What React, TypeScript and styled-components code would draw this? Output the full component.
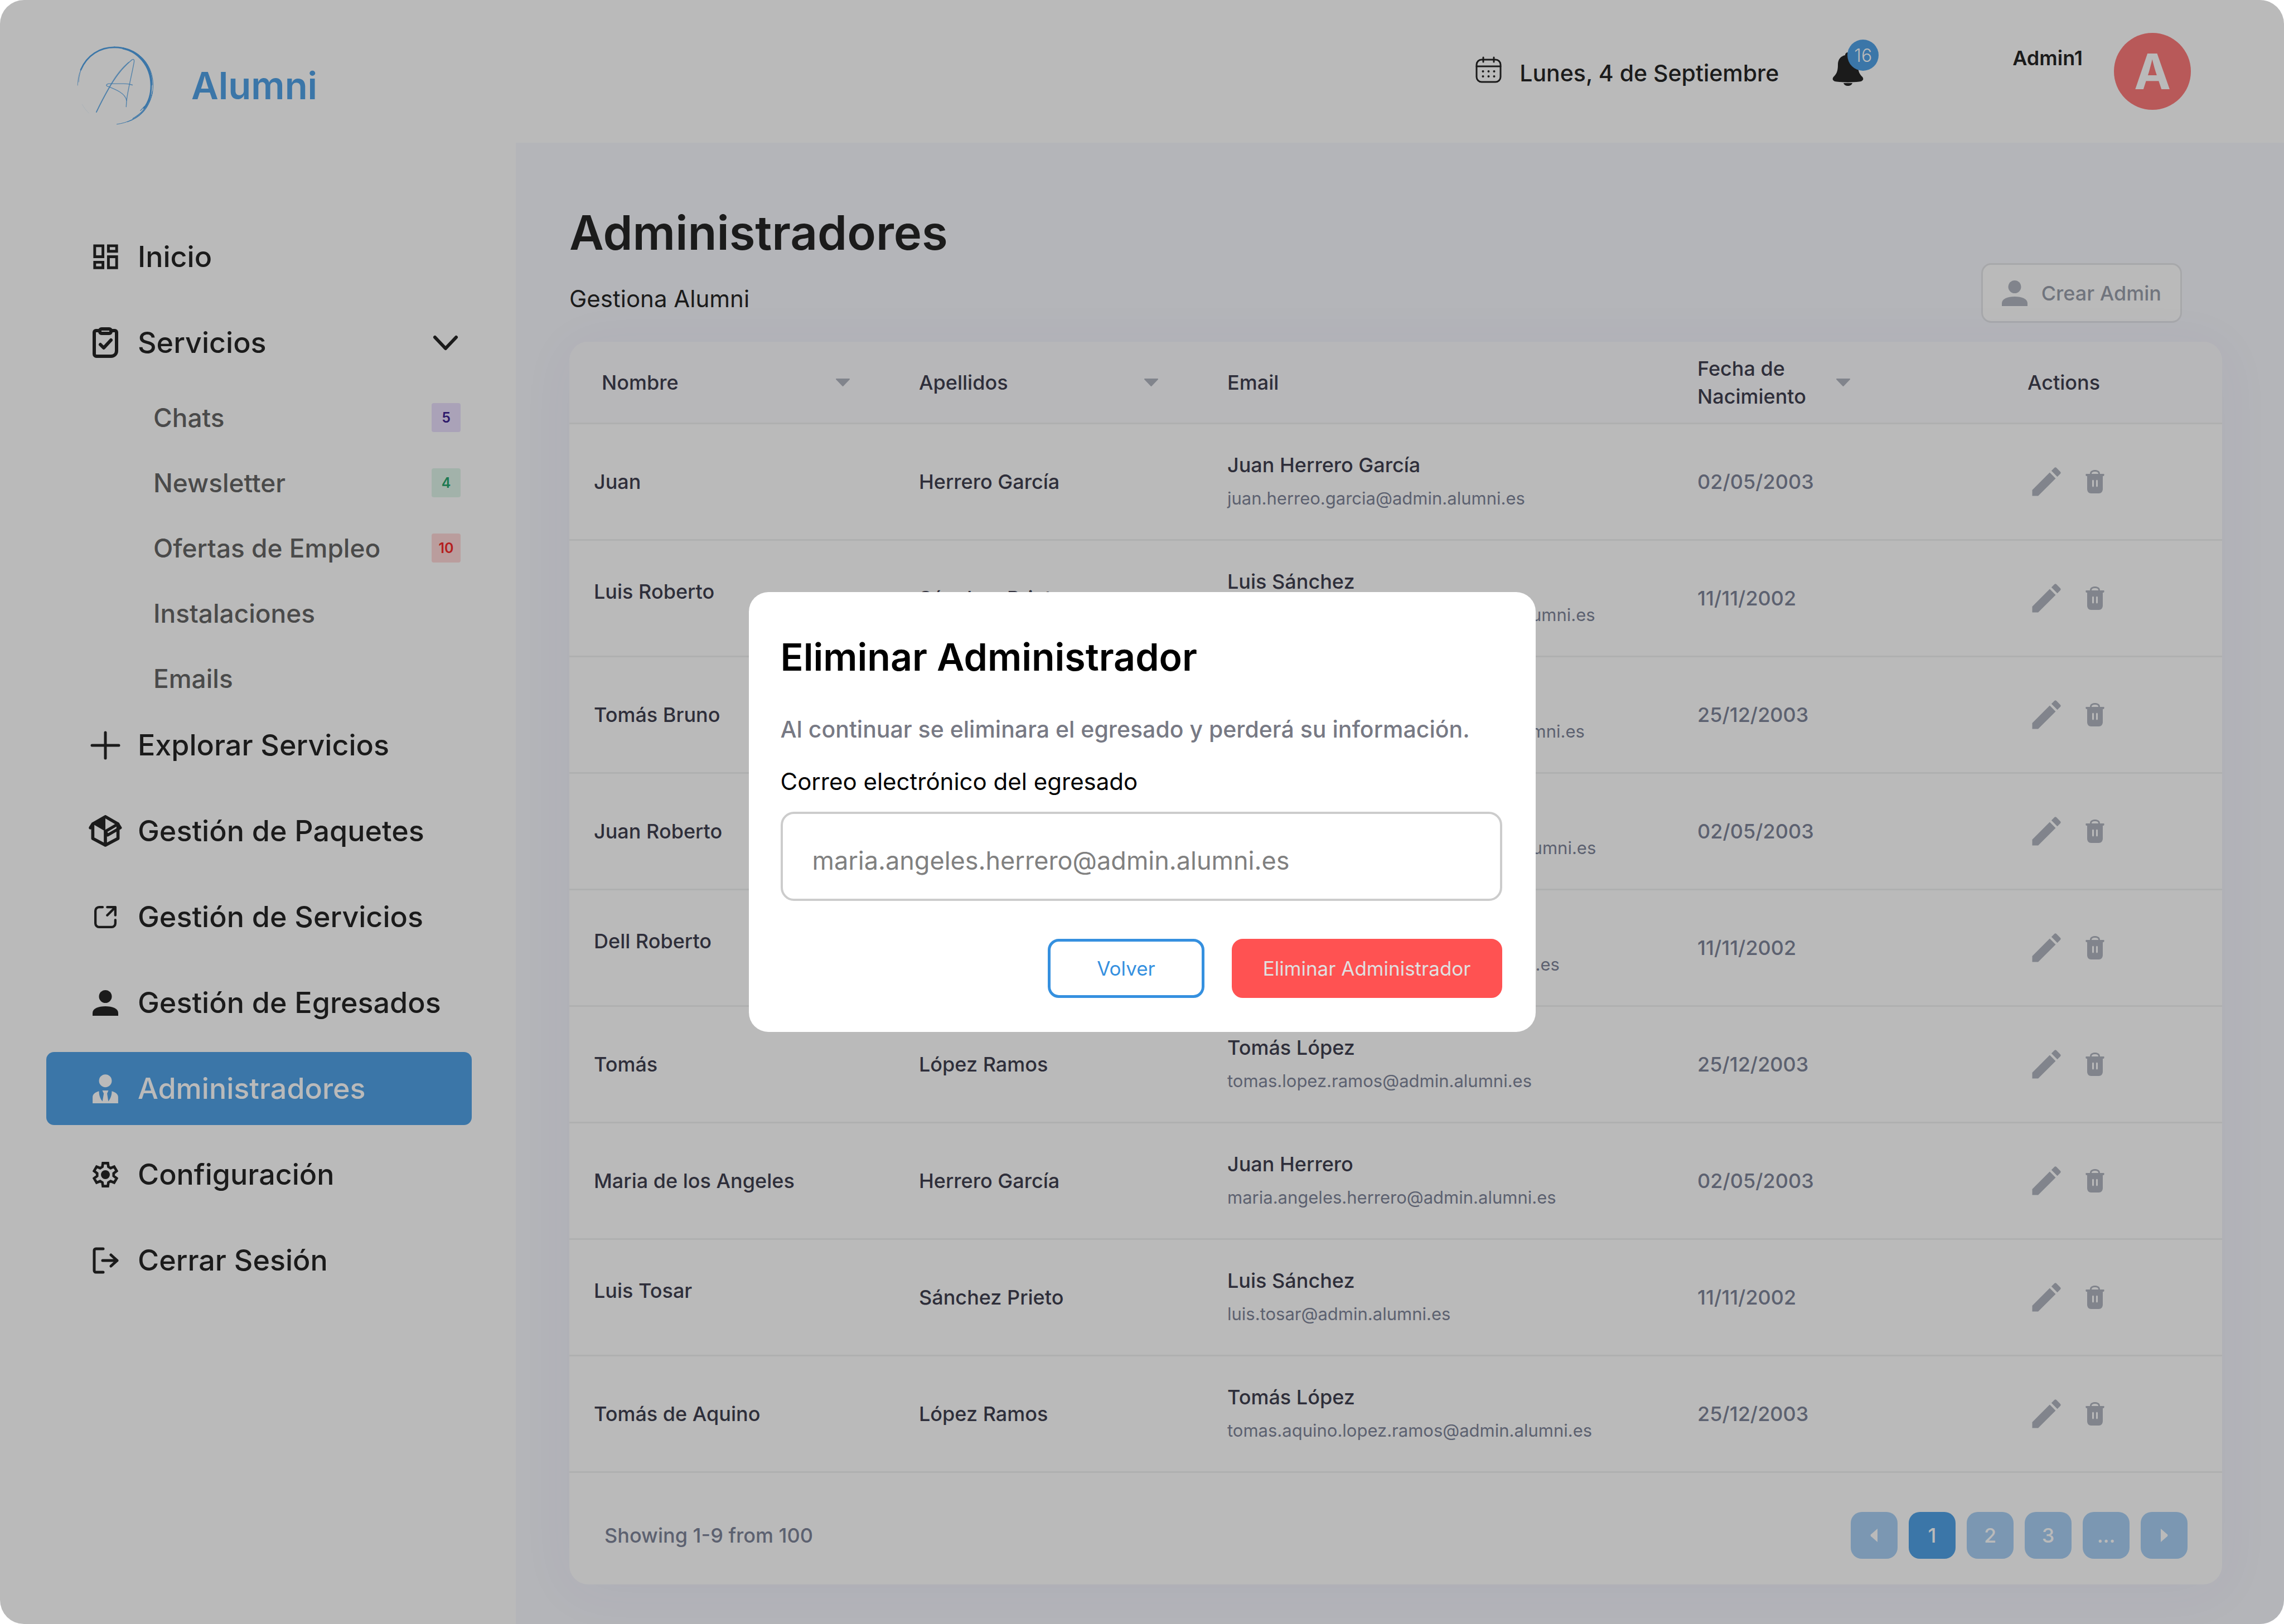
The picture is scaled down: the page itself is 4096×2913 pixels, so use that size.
import React from "react";
import styled, { createGlobalStyle, css } from "styled-components";
import { MdOutlineDashboard, MdEdit } from "react-icons/md";

const Global = createGlobalStyle`
  *, *::before, *::after { box-sizing: border-box; }
  body { margin: 0; background: #fff; font-family: Inter, "Liberation Sans", sans-serif; color: #262626; }
  button, input { font: inherit; color: inherit; }
  button { cursor: pointer; }
  ul { list-style: none; margin: 0; padding: 0; }
  h1, h2, p { margin: 0; }
  a { color: inherit; text-decoration: none; }
  svg { display: block; flex: none; }
`;

const Page = styled.div`
  position: relative;
  min-height: 100vh;
  display: flex;
  flex-direction: column;
  background: #fff;
  border-radius: 43px;
  overflow: hidden;
`;

/* ---------- top bar ---------- */
const Header = styled.header`
  display: flex;
  height: 256px;
  padding: 59px 167px 0 138px;
`;
const Brand = styled.a`
  display: flex;
  gap: 66px;
  height: 188px;
  align-items: center;
  color: #52a2e6;
  font-size: 67px;
  font-weight: 600;
`;
const HeaderTools = styled.div`
  display: flex;
  margin-left: auto;
`;
const DateLabel = styled.time`
  display: flex;
  align-items: flex-end;
  height: 90px;
  gap: 32px;
  font-size: 41px;
  font-weight: 500;
  line-height: 36px;
`;
const BellButton = styled.button`
  position: relative;
  width: 84px;
  height: 100px;
  margin: 6px 239px 0 96px;
  padding: 0;
  border: 0;
  background: none;
`;
const BellIcon = styled.svg`
  width: 56px;
  height: 60px;
  margin-top: 18px;
`;
const BellCount = styled.span`
  position: absolute;
  top: 6px;
  left: 27px;
  width: 56px;
  height: 56px;
  border-radius: 50%;
  background: #52a2e6;
  color: #fff;
  font-size: 32px;
  font-weight: 300;
  line-height: 58px;
  text-align: center;
`;
const UserName = styled.span`
  margin-right: 56px;
  font-size: 36px;
  font-weight: 600;
  line-height: 90px;
`;
const Avatar = styled.span`
  display: grid;
  place-items: center;
  width: 138px;
  height: 138px;
  border-radius: 50%;
  background: #fc7b7b;
  color: #fff;
  font-size: 88px;
  font-weight: 700;
  line-height: 100px;
`;

/* ---------- side navigation ---------- */
const Body = styled.div`
  display: flex;
  flex: 1;
`;
const Sidebar = styled.nav`
  flex: none;
  width: 925px;
  padding: 139px 79px 0 83px;
`;
const NavList = styled.ul`
  display: flex;
  flex-direction: column;
  gap: 23px;
`;
const NavLink = styled.a<{ $active?: boolean }>`
  display: flex;
  align-items: center;
  height: 131px;
  padding: 0 24px 0 76px;
  border-radius: 14px;
  font-size: 52px;
  font-weight: 500;
  ${(p) => p.$active && css`background: #52a2e6; color: #fff;`}
`;
const NavIcon = styled.span`
  display: grid;
  place-items: center;
  width: 60px;
  height: 64px;
  margin-right: 28px;
`;
const Chevron = styled.svg`
  width: 46px;
  height: 28px;
  margin-left: auto;
`;
const SubList = styled.ul`
  display: flex;
  flex-direction: column;
  gap: 37px;
  padding: 29px 20px 0 192px;
  margin-bottom: -9px;
`;
const SubLink = styled.a`
  display: flex;
  align-items: center;
  justify-content: space-between;
  height: 80px;
  color: #666;
  font-size: 46px;
  font-weight: 500;
`;
const tones = {
  purple: ["#eadffc", "#402493"],
  green: ["#dff5ea", "#2aa770"],
  red: ["#ffd7d7", "#f82b2b"],
};
const Count = styled.span<{ $tone: keyof typeof tones }>`
  width: 52px;
  border-radius: 4px;
  background: ${(p) => tones[p.$tone][0]};
  color: ${(p) => tones[p.$tone][1]};
  font-size: 25px;
  font-weight: 600;
  line-height: 52px;
  text-align: center;
`;

/* ---------- content ---------- */
const Main = styled.main`
  display: flex;
  flex-direction: column;
  flex: 1;
  min-width: 0;
  padding: 108px 111px 71px 96px;
  background: #f7f8fe;
`;
const Top = styled.div`
  display: flex;
  justify-content: space-between;
  height: 249px;
`;
const Title = styled.h1`
  font-size: 85px;
  font-weight: 600;
  line-height: 108px;
`;
const Subtitle = styled.p`
  margin-top: 36px;
  font-size: 42px;
  line-height: 56px;
`;
const CreateButton = styled.button`
  display: flex;
  align-items: center;
  gap: 25px;
  height: 107px;
  margin: 108px 72px 0 0;
  padding: 0 34px;
  border: 3px solid #e5e6ea;
  border-radius: 18px;
  background: #fff;
  color: #9a9fac;
  font-size: 36px;
  font-weight: 500;
`;
const Card = styled.section`
  flex: 1;
  border-radius: 34px;
  background: #fff;
  box-shadow: 0 10px 100px rgba(60, 60, 150, 0.05);
  overflow: hidden;
`;
const Table = styled.table`
  width: 100%;
  table-layout: fixed;
  border-spacing: 0;
`;
const Col = styled.col<{ $w?: number }>`
  width: ${(p) => (p.$w ? p.$w + "px" : "auto")};
`;
const Th = styled.th<{ $pad?: number }>`
  height: 148px;
  padding: 0 66px 0 ${(p) => p.$pad ?? 58}px;
  border-bottom: 3px solid #f0f1f2;
  background: #fbfbfe;
  color: #3f3f50;
  font-size: 36px;
  font-weight: 500;
  line-height: 50px;
  text-align: left;
`;
const Sort = styled.button<{ $gap?: boolean }>`
  display: flex;
  align-items: center;
  justify-content: ${(p) => (p.$gap ? "flex-start" : "space-between")};
  gap: 54px;
  width: 100%;
  padding: 0;
  border: 0;
  background: none;
  text-align: left;
`;
const Td = styled.td<{ $pad?: number; $raised?: boolean }>`
  height: 209px;
  padding: 0 0 ${(p) => (p.$raised ? 24 : 0)}px ${(p) => p.$pad ?? 58}px;
  border-bottom: 3px solid #f0f1f2;
  color: #3f3f50;
  font-size: 36px;
  font-weight: 500;
  white-space: nowrap;
`;
const DateTd = styled(Td)`
  color: #7f869a;
`;
const Person = styled.div`
  line-height: 60px;
`;
const Mail = styled.div`
  color: #7f869a;
  font-size: 31px;
  font-weight: 400;
  line-height: 60px;
`;
const Actions = styled.div`
  display: flex;
  align-items: center;
  gap: 36px;
  color: #b1b6c0;
`;
const IconButton = styled.button`
  padding: 0;
  border: 0;
  background: none;
`;
const Footer = styled.footer`
  display: flex;
  align-items: center;
  justify-content: space-between;
  padding: 70px 62px 46px 63px;
  color: #7f869a;
  font-size: 36px;
  font-weight: 500;
`;
const Pager = styled.nav`
  display: flex;
  gap: 20px;
`;
const PageButton = styled.button<{ $on?: boolean }>`
  display: grid;
  place-items: center;
  width: 84px;
  height: 84px;
  padding: 0;
  border: 0;
  border-radius: 20px;
  background: ${(p) => (p.$on ? "#52a2e6" : "#a9d0f4")};
  color: #fff;
  font-size: 36px;
  font-weight: 500;
`;

/* ---------- dialog ---------- */
const Overlay = styled.div`
  position: absolute;
  inset: 0;
  display: grid;
  place-items: center;
  background: rgba(0, 0, 0, 0.27);
`;
const Dialog = styled.form`
  width: 1411px;
  padding: 70px 60px 61px 57px;
  border-radius: 35px;
  background: #fff;
  color: #000;
`;
const DialogTitle = styled.h2`
  font-size: 68px;
  font-weight: 600;
  line-height: 92px;
`;
const DialogText = styled.p`
  margin-top: 54px;
  color: #777984;
  font-size: 41px;
  font-weight: 500;
  line-height: 60px;
`;
const Label = styled.label`
  display: block;
  margin: 34px 0 24px;
  font-size: 42px;
  line-height: 60px;
`;
const Input = styled.input`
  width: 100%;
  height: 160px;
  padding: 14px 53px 0;
  border: 4px solid #ccc;
  border-radius: 24px;
  background: #fff;
  color: #808080;
  font-size: 45px;
`;
const Buttons = styled.div`
  display: flex;
  justify-content: flex-end;
  gap: 49px;
  margin-top: 68px;
`;
const DialogButton = styled.button<{ $danger?: boolean }>`
  height: 106px;
  padding: 0 ${(p) => (p.$danger ? 51 : 83)}px;
  border: 5px solid ${(p) => (p.$danger ? "#ff5252" : "#3590df")};
  border-radius: 20px;
  background: ${(p) => (p.$danger ? "#ff5252" : "#fff")};
  color: ${(p) => (p.$danger ? "#e0e0e0" : "#3590df")};
  font-size: 35px;
  font-weight: 400;
`;

/* ---------- drawings ---------- */
const Logo = () => (
  <svg width="139" height="142" viewBox="50 45 585 600" fill="none" stroke="#52a2e6" strokeLinecap="round">
    <path d="M78 228C125 115 225 57 333 57" strokeWidth="11" />
    <path d="M333 57c160 0 278 130 278 290 0 65-18 125-54 171" strokeWidth="12" />
    <path d="M400 66c60 12 110 42 148 84 42 48 66 110 66 190" strokeWidth="14" />
    <path d="M380 59C520 75 626 190 626 345c0 150-110 275-275 295" strokeWidth="4" />
    <path d="M622 390c-20 110-80 195-190 232M608 420c-18 80-70 140-136 176M560 505l-30 32" strokeWidth="5" />
    <path d="M54 345c1-45 8-82 24-117M62 320c2-35 8-60 16-90" strokeWidth="3" />
    <path d="M88 490q20 36 50 66" strokeWidth="1" opacity="0.5" />
    <path d="M196 548C260 425 335 255 466 151c14-6 18 0 16 16C462 280 436 370 425 460" strokeWidth="6" opacity="0.8" />
    <path d="M196 548C230 470 270 400 310 332 350 262 400 205 440 172" strokeWidth="8" opacity="0.5" />
    <path d="M422 508l3-48c-10-55-80-82-148-109-12-8 0-17 14-18h110c30 0 48 3 68 10" strokeWidth="6" opacity="0.8" />
  </svg>
);
const CalendarIcon = () => (
  <svg width="47" height="48" viewBox="0 0 47 48" fill="none" stroke="currentColor" strokeWidth="3" strokeLinecap="round">
    <rect x="2" y="6" width="43" height="40" rx="9" />
    <path d="M2 18h43M14 2v8M33 2v8" />
    <path d="M13.500 27v0M23.500 27v0M33.500 27v0M13.500 36v0M23.500 36v0M33.500 36v0" strokeWidth="4" />
  </svg>
);
const ServicesIcon = () => (
  <svg width="46" height="56" viewBox="0 0 46 56" fill="none" stroke="currentColor" strokeWidth="6" strokeLinecap="round" strokeLinejoin="round">
    <path d="M13 6H6a3 3 0 0 0-3 3v39a4 4 0 0 0 4 4h26c6 0 10-4 10-10V9a3 3 0 0 0-3-3h-7" />
    <rect x="13" y="3" width="20" height="8" rx="3" />
    <path d="m14 31 6 6 13-14" />
  </svg>
);
const PlusIcon = () => (
  <svg width="54" height="52" viewBox="0 0 54 52" stroke="currentColor" strokeWidth="5" strokeLinecap="round">
    <path d="M27 3v46M3 26h48" />
  </svg>
);
const PackageIcon = () => (
  <svg width="60" height="57" viewBox="72 50 252 242" fill="none" stroke="currentColor" strokeWidth="24" strokeLinejoin="round" strokeLinecap="round">
    <path d="M198 62l96 56v110l-96 51-96-51V118zM102 118l-18 29M198 174v105" />
    <path d="M198 62v112l-96-56z" fill="currentColor" stroke="none" />
    <path d="M198 174l96-56 18 29-97 56z" strokeWidth="22" />
  </svg>
);
const ExternalIcon = () => (
  <svg width="40" height="40" viewBox="132 748 168 168" fill="none" stroke="currentColor" strokeWidth="18" strokeLinecap="round" strokeLinejoin="round">
    <path d="M195 757h-26a28 28 0 0 0-28 28v94a28 28 0 0 0 28 28h94a28 28 0 0 0 28-28v-25M230 757h61v61M291 757L230 818" />
  </svg>
);
const PersonIcon = () => (
  <svg width="46" height="46" viewBox="0 0 46 46" fill="currentColor">
    <circle cx="23" cy="11.500" r="11.500" />
    <path d="M0 46v-5c0-8 10-12 23-12s23 4 23 12v5z" />
  </svg>
);
const AdminIcon = () => (
  <svg width="46" height="52" viewBox="96 90 192 218" fill="currentColor">
    <circle cx="192" cy="139" r="48" />
    <path d="M96 308V262c0-22 20-38 48-45 0 30 8 55 26 76l10-58-11-23h46l-10 23 9 58c18-21 26-46 26-76 28 7 48 23 48 45v46z" />
  </svg>
);
const GearIcon = () => (
  <svg width="46" height="46" viewBox="108 768 196 196" fill="none" stroke="currentColor" strokeWidth="20">
    <path d="M187 778H225L229 806 246 816 273 805 292 838 269 856V876L292 894 273 927 246 916 229 926 225 954H187L183 926 166 916 139 927 120 894 143 876V856L120 838 139 805 166 816 183 806Z" />
    <circle cx="206" cy="866" r="34" fill="currentColor" stroke="none" />
  </svg>
);
const LogoutIcon = () => (
  <svg width="48" height="48" viewBox="0 0 48 48" fill="none" stroke="currentColor" strokeWidth="5" strokeLinecap="round" strokeLinejoin="round">
    <path d="M20 3H7a3 3 0 0 0-3 3v36a3 3 0 0 0 3 3h13M19 24h26M34 14l11 10-11 10" />
  </svg>
);
const TrashIcon = () => (
  <svg width="34" height="42" viewBox="0 0 34 42" fill="currentColor">
    <path d="M8 7C8 2 12 0 17 0s9 2 9 7h7c1 0 1 4-1 4h-1v23c0 5-3 8-7 8H10c-4 0-7-3-7-8V11H2C0 11 0 7 1 7zm3 0h12c0-3-2-4-6-4s-6 1-6 4zm1 12v10q1.500 3 3 0V19q-1.500-3-3 0zm7 0v10q1.500 3 3 0V19q-1.500-3-3 0z" fillRule="evenodd" />
  </svg>
);
const Caret = () => (
  <svg width="25" height="14" viewBox="0 0 25 14" fill="#b1b6c0" stroke="#b1b6c0" strokeWidth="2" strokeLinejoin="round">
    <path d="M1 1h23L12.500 13z" />
  </svg>
);
const PageArrow = ({ left }: { left?: boolean }) => (
  <svg width="14" height="24" viewBox="0 0 14 24" fill="#fff">
    <path d={left ? "M13 0v24L1 13.500q-1-1.500 0-3z" : "M1 0v24l12-10.500q1-1.500 0-3z"} />
  </svg>
);

/* ---------- data ---------- */
const subItems: { label: string; count?: number; tone?: keyof typeof tones }[] = [
  { label: "Chats", count: 5, tone: "purple" },
  { label: "Newsletter", count: 4, tone: "green" },
  { label: "Ofertas de Empleo", count: 10, tone: "red" },
  { label: "Instalaciones" },
  { label: "Emails" },
];
const navItems = [
  { label: "Inicio", icon: <MdOutlineDashboard size={59} /> },
  { label: "Servicios", icon: <ServicesIcon />, open: true },
  { label: "Explorar Servicios", icon: <PlusIcon /> },
  { label: "Gestión de Paquetes", icon: <PackageIcon /> },
  { label: "Gestión de Servicios", icon: <ExternalIcon /> },
  { label: "Gestión de Egresados", icon: <PersonIcon /> },
  { label: "Administradores", icon: <AdminIcon />, active: true },
  { label: "Configuración", icon: <GearIcon /> },
  { label: "Cerrar Sesión", icon: <LogoutIcon /> },
];
const rows = [
  { first: "Juan", last: "Herrero García", person: "Juan Herrero García", mail: "juan.herreo.garcia@admin.alumni.es", date: "02/05/2003" },
  { first: "Luis Roberto", last: "Sánchez Prieto", person: "Luis Sánchez", mail: "luis.roberto.sanchez.prieto@admin.alumni.es", date: "11/11/2002", raised: true },
  { first: "Tomás Bruno", last: "López Ramos", person: "Tomás López", mail: "tomas.bruno.lopez.ramos@admin.alumni.es", date: "25/12/2003" },
  { first: "Juan Roberto", last: "Herrero García", person: "Juan Herrero", mail: "juan.roberto.herrero.garcia@admin.alumni.es", date: "02/05/2003" },
  { first: "Dell Roberto", last: "Sánchez Prieto", person: "Luis Sánchez", mail: "dell.roberto.sanchez.p@admin.alumni.es", date: "11/11/2002", raised: true },
  { first: "Tomás", last: "López Ramos", person: "Tomás López", mail: "tomas.lopez.ramos@admin.alumni.es", date: "25/12/2003" },
  { first: "Maria de los Angeles", last: "Herrero García", person: "Juan Herrero", mail: "maria.angeles.herrero@admin.alumni.es", date: "02/05/2003" },
  { first: "Luis Tosar", last: "Sánchez Prieto", person: "Luis Sánchez", mail: "luis.tosar@admin.alumni.es", date: "11/11/2002", raised: true },
  { first: "Tomás de Aquino", last: "López Ramos", person: "Tomás López", mail: "tomas.aquino.lopez.ramos@admin.alumni.es", date: "25/12/2003" },
];

export default function App() {
  return (
    <Page>
      <Global />
      <Header>
        <Brand href="#inicio">
          <Logo />
          Alumni
        </Brand>
        <HeaderTools>
          <DateLabel>
            <CalendarIcon />
            Lunes, 4 de Septiembre
          </DateLabel>
          <BellButton type="button" aria-label="Notificaciones">
            <BellIcon viewBox="0 0 56 60" fill="currentColor">
              <path d="M28 0c3 0 5 2 5 5 9 2 13 9 13 17 0 13 3 17 8 22 3 4 1 8-6 8.500-12 1.500-28 1.500-40 0C1 52-1 48 2 44c5-5 8-9 8-22 0-8 4-15 13-17 0-3 2-5 5-5zM20 55h16c-1 3-4 5-8 5s-7-2-8-5z" />
            </BellIcon>
            <BellCount>16</BellCount>
          </BellButton>
          <UserName>Admin1</UserName>
          <Avatar>A</Avatar>
        </HeaderTools>
      </Header>
      <Body>
        <Sidebar>
          <NavList>
            {navItems.map((item) => (
              <li key={item.label}>
                <NavLink href="#" $active={item.active}>
                  <NavIcon>{item.icon}</NavIcon>
                  {item.label}
                  {item.open && (
                    <Chevron viewBox="0 0 46 28" fill="none" stroke="currentColor" strokeWidth="6" strokeLinecap="round" strokeLinejoin="round">
                      <path d="M4 4l19 20L42 4" />
                    </Chevron>
                  )}
                </NavLink>
                {item.open && (
                  <SubList>
                    {subItems.map((sub) => (
                      <li key={sub.label}>
                        <SubLink href="#">
                          {sub.label}
                          {sub.tone && <Count $tone={sub.tone}>{sub.count}</Count>}
                        </SubLink>
                      </li>
                    ))}
                  </SubList>
                )}
              </li>
            ))}
          </NavList>
        </Sidebar>
        <Main>
          <Top>
            <div>
              <Title>Administradores</Title>
              <Subtitle>Gestiona Alumni</Subtitle>
            </div>
            <CreateButton type="button">
              <svg width="46" height="46" viewBox="0 0 46 46" fill="#b1b6c0">
                <circle cx="23" cy="11.500" r="11.500" />
                <path d="M0 46v-5c0-8 10-12 23-12s23 4 23 12v5z" />
              </svg>
              Crear Admin
            </CreateButton>
          </Top>
          <Card>
            <Table>
              <colgroup>
                <Col $w={569} />
                <Col $w={553} />
                <Col />
                <Col $w={400} />
                <Col $w={599} />
              </colgroup>
              <thead>
                <tr>
                  <Th><Sort type="button">Nombre <Caret /></Sort></Th>
                  <Th><Sort type="button">Apellidos <Caret /></Sort></Th>
                  <Th>Email</Th>
                  <Th><Sort type="button" $gap><span>Fecha de<br />Nacimiento</span> <Caret /></Sort></Th>
                  <Th $pad={250}>Actions</Th>
                </tr>
              </thead>
              <tbody>
                {rows.map((r) => (
                  <tr key={r.mail}>
                    <Td $pad={44} $raised={r.raised}>{r.first}</Td>
                    <Td>{r.last}</Td>
                    <Td>
                      <Person>{r.person}</Person>
                      <Mail>{r.mail}</Mail>
                    </Td>
                    <DateTd>{r.date}</DateTd>
                    <Td $pad={250}>
                      <Actions>
                        <IconButton type="button" aria-label={"Editar " + r.first}><MdEdit size={68} /></IconButton>
                        <IconButton type="button" aria-label={"Eliminar " + r.first}><TrashIcon /></IconButton>
                      </Actions>
                    </Td>
                  </tr>
                ))}
              </tbody>
            </Table>
            <Footer>
              Showing 1-9 from 100
              <Pager aria-label="Páginas">
                <PageButton type="button" aria-label="Anterior"><PageArrow left /></PageButton>
                <PageButton type="button" $on>1</PageButton>
                <PageButton type="button">2</PageButton>
                <PageButton type="button">3</PageButton>
                <PageButton type="button">...</PageButton>
                <PageButton type="button" aria-label="Siguiente"><PageArrow /></PageButton>
              </Pager>
            </Footer>
          </Card>
        </Main>
      </Body>
      <Overlay>
        <Dialog role="dialog" aria-modal="true" aria-labelledby="dialog-title" onSubmit={(e) => e.preventDefault()}>
          <DialogTitle id="dialog-title">Eliminar Administrador</DialogTitle>
          <DialogText>Al continuar se eliminara el egresado y perderá su información.</DialogText>
          <Label htmlFor="email">Correo electrónico del egresado</Label>
          <Input id="email" type="email" defaultValue="maria.angeles.herrero@admin.alumni.es" />
          <Buttons>
            <DialogButton type="button">Volver</DialogButton>
            <DialogButton type="submit" $danger>Eliminar Administrador</DialogButton>
          </Buttons>
        </Dialog>
      </Overlay>
    </Page>
  );
}
